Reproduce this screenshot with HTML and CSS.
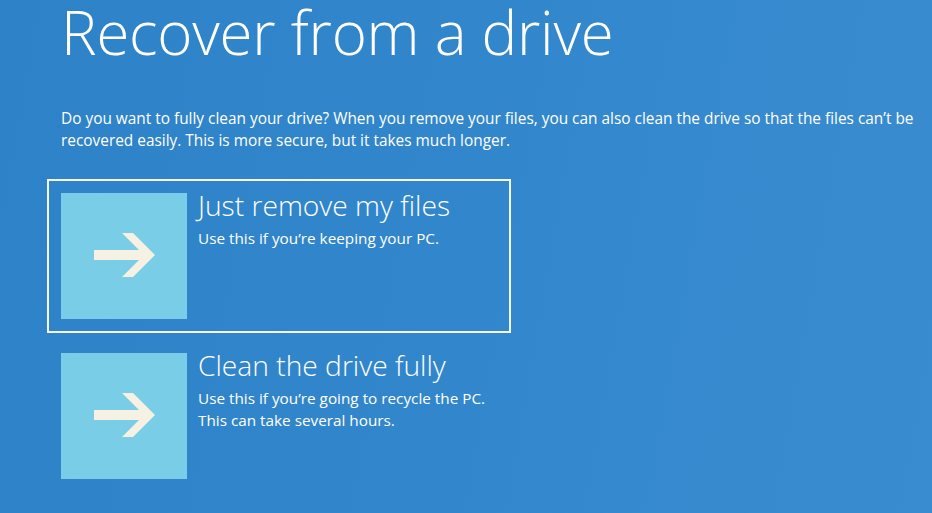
FILE: index.html
```html
<!DOCTYPE html>
<html>
<head>
<meta charset="utf-8">
<link rel="stylesheet" href="styles.css">
</head>
<body>
<div class="page">
  <h1 class="title">Recover from a drive</h1>
  <p class="intro">Do you want to fully clean your drive? When you remove your files, you can also clean the drive so that the files can’t be recovered easily. This is more secure, but it takes much longer.</p>
  <div class="options">
    <div class="option selected">
      <div class="tile">
        <svg width="126" height="126" viewBox="0 0 126 126"><path d="M33 57 H78 L61 40 H72 L94 62 L72 84 H61 L78 67 H33 Z" fill="#f6f1e2"/></svg>
      </div>
      <div class="text">
        <div class="heading">Just remove my files</div>
        <div class="desc">Use this if you’re keeping your PC.</div>
      </div>
    </div>
    <div class="option">
      <div class="tile">
        <svg width="126" height="126" viewBox="0 0 126 126"><path d="M33 57 H78 L61 40 H72 L94 62 L72 84 H61 L78 67 H33 Z" fill="#f6f1e2"/></svg>
      </div>
      <div class="text">
        <div class="heading">Clean the drive fully</div>
        <div class="desc">Use this if you’re going to recycle the PC.<br>This can take several hours.</div>
      </div>
    </div>
  </div>
</div>
</body>
</html>
```
FILE: styles.css
```css
html, body {
  margin: 0;
  padding: 0;
  height: 100%;
}
body {
  background: linear-gradient(100deg, #2e82c8 0%, #3287cc 50%, #3a8cd0 100%);
  color: #ffffff;
  font-family: "Open Sans", "Noto Sans", sans-serif;
  overflow: hidden;
}
.page {
  padding: 0 0 0 47px;
}
.title {
  margin: 0 0 0 14px;
  font-weight: 300;
  font-size: 60px;
  line-height: 64px;
  letter-spacing: -0.25px;
}
.intro {
  margin: 44px 0 0 14px;
  width: 866px;
  font-size: 15.4px;
  line-height: 22px;
  font-weight: 400;
}
.options {
  margin-top: 27px;
  display: flex;
  flex-direction: column;
  gap: 6px;
}
.option {
  width: 436px;
  height: 126px;
  padding: 12px;
  border: 2px solid transparent;
  display: flex;
  gap: 11px;
}
.option.selected {
  border-color: #f4f6f8;
}
.tile {
  width: 126px;
  height: 126px;
  flex: none;
  background: #7acde6;
}
.tile svg {
  display: block;
}
.heading {
  font-weight: 300;
  font-size: 28.2px;
  line-height: 30px;
  margin-top: -3px;
}
.desc {
  margin-top: 7px;
  font-size: 15.3px;
  line-height: 22px;
}
```
